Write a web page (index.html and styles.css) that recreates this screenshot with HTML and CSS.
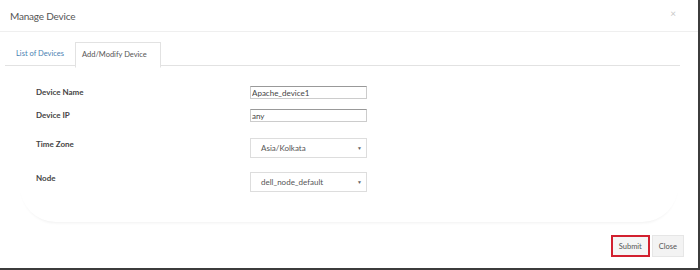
FILE: index.html
```html
<!DOCTYPE html>
<html lang="en">
<head>
    <meta charset="UTF-8">
    <title>Manage Device</title>
    <link rel="stylesheet" href="styles.css">
</head>
<body>

    <div class="modal">
        <div class="modal-header">
            <span class="modal-title">Manage Device</span>
            <span class="close-x">&times;</span>
        </div>

        <div class="tabs">
            <a class="tab">List of Devices</a>
            <a class="tab active">Add/Modify Device</a>
        </div>

        <div class="panel">
            <div class="row">
                <label class="lbl">Device Name</label>
                <input class="field" type="text" value="Apache_device1">
            </div>
            <div class="row row-ip">
                <label class="lbl">Device IP</label>
                <input class="field" type="text" value="any">
            </div>
            <div class="row row-sel">
                <label class="lbl">Time Zone</label>
                <div class="select"><span>Asia/Kolkata</span><span class="caret">&#9660;</span></div>
            </div>
            <div class="row row-node">
                <label class="lbl">Node</label>
                <div class="select"><span>dell_node_default</span><span class="caret">&#9660;</span></div>
            </div>
        </div>

        <div class="modal-footer">
            <button class="btn btn-submit">Submit</button>
            <button class="btn">Close</button>
        </div>
    </div>

</body>
</html>
```

FILE: styles.css
```css
body {
    margin: 0;
    padding: 0;
    background: #fff;
    font-family: Lato, "Open Sans", sans-serif;
    color: #444;
}
.modal {
    width: 698px;
    height: 268px;
    border-right: 2px solid #3c3c3c;
    border-bottom: 2px solid #3c3c3c;
    background: #fff;
}
.modal-header {
    height: 31px;
    border-bottom: 1px solid #efefef;
    display: flex;
    align-items: center;
    justify-content: space-between;
    padding: 0 22px 0 10px;
}
.modal-title {
    font-size: 10px;
    letter-spacing: -0.2px;
    color: #555;
}
.close-x {
    font-size: 10px;
    color: #c8c8c8;
    margin-top: -6px;
}
.tabs {
    display: flex;
    margin: 10px 18px 0 5px;
    border-bottom: 1px solid #e2e2e2;
    height: 23px;
}
.tab {
    font-size: 7.5px;
    padding: 0 11px;
    line-height: 23px;
    color: #4a7fb2;
}
.tab.active {
    color: #555;
    padding: 0 13px 0 6px;
    border: 1px solid #e2e2e2;
    border-bottom: 1px solid #fff;
    background: #fff;
    height: 24px;
    line-height: 24px;
}
.panel {
    margin: 0 20px;
    padding: 20px 0 30px 16px;
    border-radius: 0 0 36px 36px;
    box-shadow: 0 3px 3px -2px rgba(0, 0, 0, 0.06);
}
.row {
    display: flex;
    align-items: flex-start;
}
.row-ip {
    margin-top: 10px;
}
.row-sel {
    margin-top: 16px;
}
.row-node {
    margin-top: 14px;
}
.lbl {
    width: 214px;
    font-size: 8px;
    font-weight: bold;
    color: #444;
    line-height: 13px;
}
.field {
    width: 117px;
    height: 13px;
    box-sizing: border-box;
    border: 1px solid #ccc;
    border-top-color: #999;
    padding: 0 1px;
    margin: 0;
    font-family: Lato, "Open Sans", sans-serif;
    font-size: 8px;
    color: #444;
}
.select {
    width: 117px;
    height: 20px;
    box-sizing: border-box;
    border: 1px solid #ddd;
    display: flex;
    align-items: center;
    justify-content: space-between;
    padding: 0 4px 0 10px;
    font-size: 8px;
    color: #555;
}
.caret {
    font-size: 5px;
    color: #666;
}
.modal-footer {
    display: flex;
    justify-content: flex-end;
    gap: 2px;
    padding: 13px 14px 0 0;
}
.btn {
    font-family: Lato, "Open Sans", sans-serif;
    font-size: 7.5px;
    color: #555;
    background: #f3f3f3;
    border: 1px solid #e6e6e6;
    height: 22px;
    padding: 0 6px;
    margin: 0;
}
.btn-submit {
    width: 39px;
    border: 2px solid #d2202f;
    background: #f5f5f5;
}
```
